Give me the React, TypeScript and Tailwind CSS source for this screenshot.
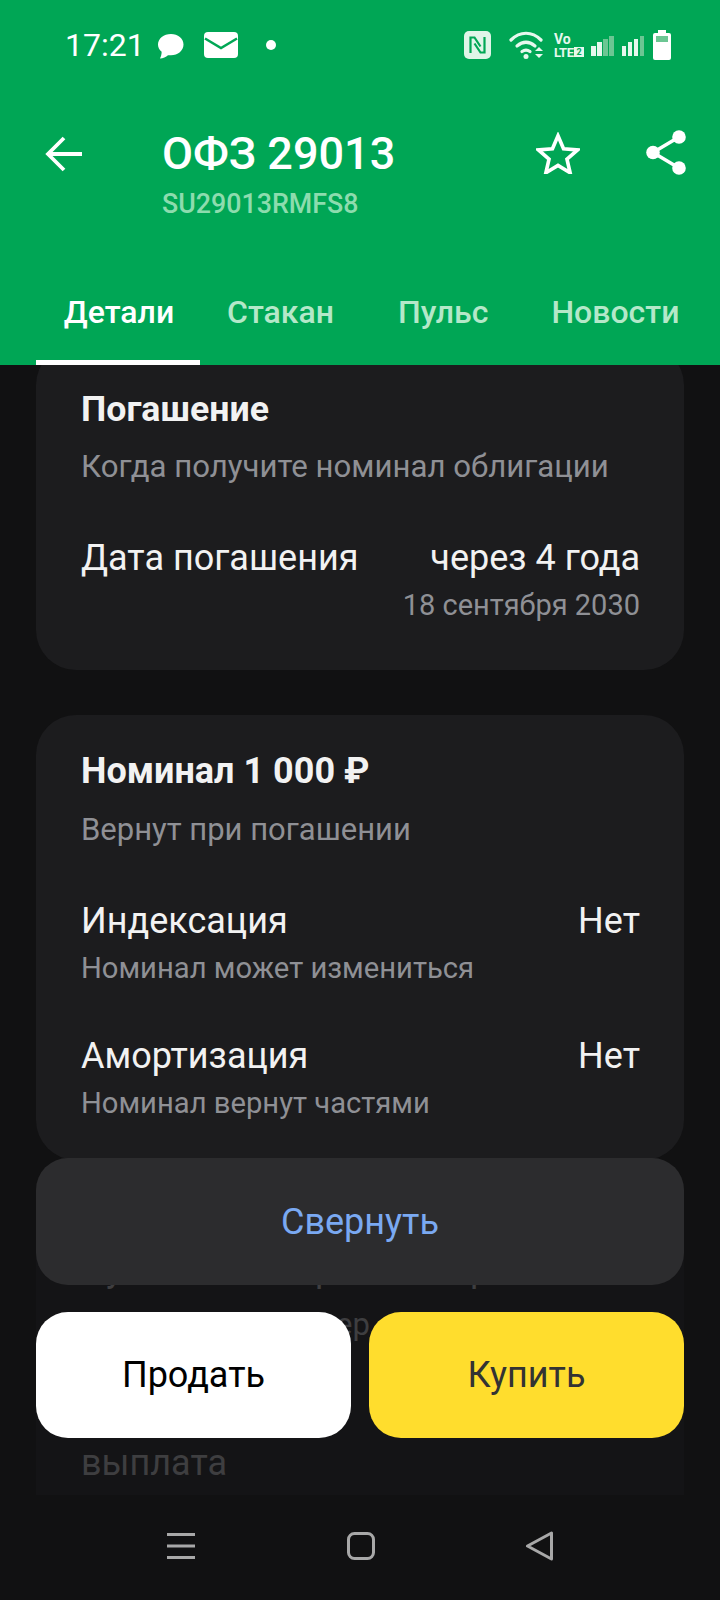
const F = { fontFamily: 'Roboto, "Noto Sans", sans-serif' };

function Bars({ lit }: { lit: number }) {
  const hs = ["h-[10px]", "h-[14px]", "h-[17px]", "h-[20px]"];
  return (
    <div className="flex items-end gap-[1.5px]">
      {hs.map((h, i) => (
        <span key={h} className={`${h} w-[4.500px] ${i < lit ? "bg-[#e6f8ee]" : "bg-[#6cc693]"}`} />
      ))}
    </div>
  );
}

function StatusBar() {
  return (
    <div className="flex h-[90px] items-center justify-between pl-[65px] pr-[49px] text-white">
      <div className="flex items-center">
        <span className="text-[32px] leading-none">17:21</span>
        <svg className="ml-[12px] mt-[2px]" width="27" height="26" viewBox="0 0 28 27" fill="white">
          <path d="M14.500 1C7 1 1 5.800 1 12c0 3 1.400 5.600 3.800 7.600 0 2.600-.6 4.900-1.800 6.900 3.400-.4 6.300-1.600 8.400-3.500 .9.200 1.900.2 3.100.2 7.200 0 13-4.800 13-11.200S21.700 1 14.500 1z" />
        </svg>
        <svg className="ml-[20px]" width="34" height="26" viewBox="0 0 34 26">
          <rect width="34" height="26" rx="4" fill="white" />
          <path d="M1 6.500 L17 16 L33 6.500" fill="none" stroke="#00a755" strokeWidth="2.500" />
        </svg>
        <span className="ml-[28px] size-[10px] rounded-full bg-white" />
      </div>
      <div className="flex items-center">
        <svg width="27" height="28" viewBox="0 0 27 28">
          <rect width="27" height="28" rx="5" fill="#dff5e8" />
          <path d="M6.500 22V6.500h4l6 9M20.500 6v15.500h-4l-6-9" fill="none" stroke="#00a755" strokeWidth="2.200" />
        </svg>
        <svg className="ml-[18px]" width="34" height="28" viewBox="0 0 34 28" fill="none" stroke="#e6f8ee" strokeWidth="3.200" strokeLinecap="round">
          <path d="M2 9c9-9 21-9 30 0" />
          <path d="M8 15c6-5 12-5 18 0" />
          <path d="M13 20.500c3-2 5-2 8 0" />
          <circle cx="17" cy="25.500" r="2.500" fill="#e6f8ee" stroke="none" />
          <path d="M26 20h8l-4-4zM26 23h8l-4 4z" fill="#e6f8ee" stroke="none" />
        </svg>
        <div className="ml-[11px] flex w-[28px] flex-col text-[#e6f8ee]">
          <span className="text-[14px] font-bold leading-[14px]">Vo</span>
          <span className="flex items-center text-[13px] font-bold leading-[13px] tracking-[-0.5px]">LTE<span className="ml-[1px] bg-[#e6f8ee] px-[2px] text-[9px] leading-[10px] tracking-normal text-[#00a755]">2</span></span>
        </div>
        <div className="ml-[9px] mt-[2px]"><Bars lit={2} /></div>
        <div className="ml-[8px] mt-[2px]"><Bars lit={3} /></div>
        <svg className="ml-[9px]" width="18" height="30" viewBox="0 0 18 30">
          <rect x="5" width="8" height="4" fill="white" />
          <rect y="3" width="18" height="27" rx="2" fill="white" />
          <rect x="3" y="6" width="12" height="6" fill="#6cc693" />
        </svg>
      </div>
    </div>
  );
}

function Row({ left, right, sub, subGap }: { left: string; right: string; sub: string; subGap: string }) {
  return (
    <div>
      <div className="flex items-center justify-between text-[36px] leading-[44px] text-[#f2f2f2]">
        <span>{left}</span>
        <span>{right}</span>
      </div>
      <div className={`${subGap} text-[29.200px] leading-[40px] text-[#8f9095]`}>{sub}</div>
    </div>
  );
}

export default function App() {
  return (
    <div style={F} className="relative flex h-[1600px] w-[720px] flex-col overflow-hidden bg-[#111112]">
      <header className="z-10 flex h-[365px] shrink-0 flex-col bg-[#00a655]">
        <StatusBar />
        <div className="flex h-[130px] items-start">
          <svg className="ml-[45px] mt-[46px]" width="37" height="36" viewBox="0 0 37 36" fill="none" stroke="white" strokeWidth="3.800">
            <path d="M37 18H3M19 2L3 18l16 16" />
          </svg>
          <div className="ml-[80px] flex-1 pt-[34px]">
            <div className="text-[45px] font-medium leading-[60px] text-white">ОФЗ 29013</div>
            <div className="mt-[2px] text-[26.800px] font-medium leading-[36px] text-[#8ddcae]">SU29013RMFS8</div>
          </div>
          <svg className="mt-[42px]" width="44" height="42" viewBox="0 0 46 44" fill="none" stroke="white" strokeWidth="3.800">
            <path d="M23 4l5.800 13.500 14.700 1.300-11.100 9.600 3.300 14.300L23 35l-12.700 7.700 3.300-14.300L2.500 18.800l14.700-1.300z" />
          </svg>
          <svg className="ml-[66px] mr-[34px] mt-[40px]" width="40" height="45" viewBox="0 0 40 45" fill="white">
            <circle cx="33" cy="7" r="6.800" />
            <circle cx="7" cy="22.500" r="6.800" />
            <circle cx="33" cy="38" r="6.800" />
            <path d="M33 7L7 22.500 33 38" fill="none" stroke="white" strokeWidth="3.500" />
          </svg>
        </div>
        <nav className="flex h-[145px] items-start text-[32px] font-medium">
          <div className="relative ml-[36px] flex h-[145px] w-[164px] justify-center pt-[69px] pl-[2px] text-white">
            <span className="leading-[46px]">Детали</span>
            <span className="absolute bottom-0 left-0 h-[5px] w-full bg-white" />
          </div>
          <span className="ml-[27px] pt-[69px] leading-[46px] text-[#b4e8c9]">Стакан</span>
          <span className="ml-[64px] pt-[69px] leading-[46px] text-[#b4e8c9]">Пульс</span>
          <span className="ml-[63px] pt-[69px] leading-[46px] text-[#b4e8c9]">Новости</span>
        </nav>
      </header>

      <main className="flex flex-col gap-[45px] px-[36px]">
        <section className="-mt-[20px] flex h-[325px] flex-col rounded-[40px] bg-[#1c1c1e] pl-[45px] pr-[44px] pt-[42px]">
          <h2 className="text-[35.700px] font-bold leading-[44px] text-[#f2f2f2]">Погашение</h2>
          <p className="mt-[14px] text-[31.200px] leading-[44px] text-[#8f9095]">Когда получите номинал облигации</p>
          <div className="mt-[45px] flex items-center justify-between text-[36px] leading-[48px] text-[#f2f2f2]">
            <span>Дата погашения</span>
            <span>через 4 года</span>
          </div>
          <p className="mt-[1px] text-right text-[29px] leading-[44px] text-[#8f9095]">18 сентября 2030</p>
        </section>
        <section className="flex h-[445px] flex-col rounded-[40px] bg-[#1c1c1e] pl-[45px] pr-[44px] pt-[34px]">
          <h2 className="text-[36px] font-bold leading-[44px] text-[#f2f2f2]">Номинал 1 000 ₽</h2>
          <p className="mt-[15px] text-[31px] leading-[44px] text-[#8f9095]">Вернут при погашении</p>
          <div className="mt-[47px] flex flex-col gap-[46px]">
            <Row left="Индексация" right="Нет" sub="Номинал может измениться" subGap="mt-[5px]" />
            <Row left="Амортизация" right="Нет" sub="Номинал вернут частями" subGap="mt-[5px]" />
          </div>
        </section>
      </main>

      <div className="absolute left-[36px] top-[1206px] h-[289px] w-[648px] overflow-hidden bg-[#141416] text-[36px] text-[#3e3e40]">
        <span className="absolute left-[70px] top-[41px] leading-[44px]">у</span>
        <span className="absolute left-[279px] top-[41px] leading-[44px]">р</span>
        <span className="absolute left-[434px] top-[41px] leading-[44px]">р</span>
        <span className="absolute left-[300px] top-[97px] text-[31px] leading-[44px]">ер</span>
        <p className="absolute left-[45px] top-[233px] leading-[48px]">выплата</p>
      </div>

      <div className="absolute left-[36px] top-[1158px] flex h-[127px] w-[648px] items-center justify-center rounded-[32px] bg-[#2c2c2e] text-[36px] text-[#7aa9f2]">
        Свернуть
      </div>
      <div className="absolute left-[36px] top-[1312px] flex gap-[18px]">
        <div className="flex h-[126px] w-[315px] items-center justify-center rounded-[32px] bg-white text-[36px] text-black">Продать</div>
        <div className="flex h-[126px] w-[315px] items-center justify-center rounded-[32px] bg-[#ffdd2d] text-[36px] text-[#333333]">Купить</div>
      </div>

      <div className="absolute bottom-0 left-0 flex h-[105px] w-full items-center justify-center">
        <svg className="mb-[3px]" width="28" height="26" viewBox="0 0 28 26" fill="#a8a8a8">
          <rect y="0" width="28" height="3" />
          <rect y="11.500" width="28" height="3" />
          <rect y="23" width="28" height="3" />
        </svg>
        <svg className="mb-[3px] ml-[152px]" width="28" height="28" viewBox="0 0 28 28" fill="none" stroke="#a8a8a8" strokeWidth="3">
          <rect x="1.500" y="1.500" width="25" height="25" rx="6" />
        </svg>
        <svg className="mb-[3px] ml-[150px]" width="29" height="30" viewBox="0 0 28 30" fill="none" stroke="#a8a8a8" strokeWidth="3" strokeLinejoin="round">
          <path d="M26 2v26L2 15z" />
        </svg>
      </div>
    </div>
  );
}
